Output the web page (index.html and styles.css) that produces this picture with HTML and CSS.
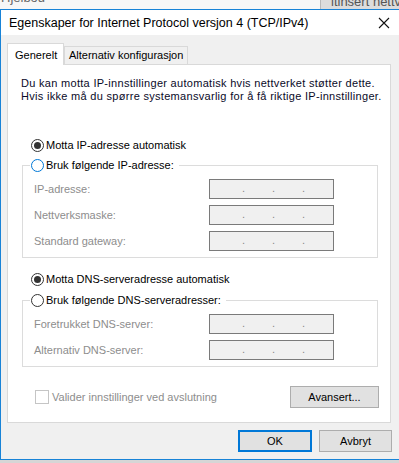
FILE: index.html
```html
<!DOCTYPE html>
<html lang="nb">
<head>
    <meta charset="UTF-8">
    <meta name="viewport" content="width=device-width, initial-scale=1.0">
    <title>Egenskaper for Internet Protocol versjon 4 (TCP/IPv4)</title>
    <link rel="stylesheet" href="styles.css">
</head>
<body>
    <div class="backdrop">
        <div class="backdrop-left"><span>Hjelbod</span></div>
        <div class="backdrop-right"><span>ltinsert nettv</span></div>
    </div>

    <div class="dialog">
        <div class="titlebar">
            <span class="title">Egenskaper for Internet Protocol versjon 4 (TCP/IPv4)</span>
            <svg class="close" width="12" height="12" viewBox="0 0 12 12">
                <path d="M1 1 L11 11 M11 1 L1 11" stroke="#111" stroke-width="1.1" fill="none"/>
            </svg>
        </div>

        <div class="body">
            <div class="tabs">
                <div class="tab active">Generelt</div>
                <div class="tab">Alternativ konfigurasjon</div>
            </div>

            <div class="panel">
                <p class="desc">Du kan motta IP-innstillinger automatisk hvis nettverket støtter dette.<br>Hvis ikke må du spørre systemansvarlig for å få riktige IP-innstillinger.</p>

                <label class="radio-row first"><span class="radio checked"></span>Motta IP-adresse automatisk</label>

                <fieldset class="group">
                    <legend><label class="radio-row"><span class="radio focus"></span>Bruk følgende IP-adresse:</label></legend>
                    <div class="field"><span class="label">IP-adresse:</span><span class="ip"><i>.</i><i>.</i><i>.</i></span></div>
                    <div class="field"><span class="label">Nettverksmaske:</span><span class="ip"><i>.</i><i>.</i><i>.</i></span></div>
                    <div class="field"><span class="label">Standard gateway:</span><span class="ip"><i>.</i><i>.</i><i>.</i></span></div>
                </fieldset>

                <label class="radio-row dns"><span class="radio checked"></span>Motta DNS-serveradresse automatisk</label>

                <fieldset class="group dns-group">
                    <legend><label class="radio-row"><span class="radio"></span>Bruk følgende DNS-serveradresser:</label></legend>
                    <div class="field"><span class="label">Foretrukket DNS-server:</span><span class="ip"><i>.</i><i>.</i><i>.</i></span></div>
                    <div class="field"><span class="label">Alternativ DNS-server:</span><span class="ip"><i>.</i><i>.</i><i>.</i></span></div>
                </fieldset>

                <div class="panel-footer">
                    <label class="check-row"><span class="checkbox"></span>Valider innstillinger ved avslutning</label>
                    <button class="btn advanced">Avansert...</button>
                </div>
            </div>

            <div class="actions">
                <button class="btn default">OK</button>
                <button class="btn">Avbryt</button>
            </div>
        </div>
    </div>
</body>
</html>
```

FILE: styles.css
```css
body {
    margin: 0;
    width: 399px;
    height: 463px;
    overflow: hidden;
    background: #d6d6d6;
    font-family: "Segoe UI", "Liberation Sans", sans-serif;
    font-size: 11px;
    color: #000;
}
.backdrop {
    display: flex;
    height: 9px;
    overflow: hidden;
}
.backdrop-left {
    flex: 1;
    background: #f7f7f7;
    padding-left: 1px;
}
.backdrop-left span,
.backdrop-right span {
    display: block;
    font-size: 13px;
    line-height: 15px;
    white-space: nowrap;
    color: #555;
}
.backdrop-left span {
    margin-top: -10px;
    color: #666;
}
.backdrop-right span {
    margin-top: -6px;
}
.backdrop-right {
    width: 68px;
    overflow: hidden;
    background: #dcdcdc;
    border-left: 1px solid #b9b9b9;
    padding-left: 10px;
}
.dialog {
    width: 398px;
    border: 1px solid #1883d7;
    border-right: none;
    background: #f0f0f0;
}
.titlebar {
    height: 25px;
    background: #fff;
    display: flex;
    align-items: center;
    justify-content: space-between;
    padding: 0 9px 0 8px;
}
.title {
    font-size: 12.5px;
}
.close {
    margin-top: 1px;
}
.body {
    padding: 8px 7px 7px 6px;
}
.tabs {
    display: flex;
    align-items: flex-end;
    height: 21px;
}
.tab {
    height: 17px;
    line-height: 17px;
    padding: 0 4px;
    border: 1px solid #d9d9d9;
    border-bottom: none;
    background: #f0f0f0;
}
.tab.active {
    height: 21px;
    line-height: 23px;
    padding: 0 7px;
    width: 41px;
    background: #fff;
    position: relative;
    margin-bottom: -1px;
    z-index: 1;
}
.panel {
    width: 382px;
    border: 1px solid #d9d9d9;
    background: #fff;
    padding-bottom: 14px;
}
.desc {
    margin: 12px 0 0 13px;
    line-height: 13px;
    letter-spacing: 0.3px;
    color: #0a0a28;
}
.radio-row {
    display: flex;
    align-items: center;
    height: 14px;
    gap: 2px;
    white-space: nowrap;
}
.radio-row.first {
    margin: 35px 0 0 23px;
}
.radio-row.dns {
    margin: 14px 0 0 23px;
}
.radio {
    width: 11px;
    height: 11px;
    border: 1px solid #333;
    border-radius: 50%;
    background: #fff;
    display: flex;
    align-items: center;
    justify-content: center;
}
.radio.checked::after {
    content: "";
    width: 7px;
    height: 7px;
    border-radius: 50%;
    background: #333;
}
.radio.focus {
    border-color: #0078d7;
}
.group {
    margin: 5px 0 0 14px;
    width: 333px;
    padding: 0 10px 6px 11px;
    border: 1px solid #dcdcdc;
}
.group legend {
    padding: 0 5px 0 1px;
    margin-left: -4px;
    height: 16px;
    display: flex;
    align-items: center;
}
.dns-group {
    margin-top: 6px;
}
.field {
    display: flex;
    align-items: center;
    height: 20px;
    margin-top: 6px;
    color: #8d8d8d;
}
.label {
    width: 175px;
}
.ip {
    border: 1px solid #7a7a7a;
    background: #f0f0f0;
    display: flex;
    padding-left: 32px;
    box-sizing: border-box;
    width: 125px;
    height: 20px;
}
.ip i {
    font-style: normal;
    width: 30px;
    line-height: 17px;
    color: #888;
}
.panel-footer {
    display: flex;
    justify-content: space-between;
    align-items: center;
    margin: 19px 11px 0 27px;
}
.check-row {
    display: flex;
    align-items: center;
    gap: 3px;
    color: #8d8d8d;
}
.checkbox {
    width: 12px;
    height: 12px;
    border: 1px solid #c5c5c5;
    background: #fff;
}
.btn {
    font: inherit;
    color: #000;
    height: 22px;
    background: #e1e1e1;
    border: 1px solid #adadad;
    padding: 0;
}
.advanced {
    width: 89px;
}
.actions {
    display: flex;
    justify-content: flex-end;
    gap: 7px;
    margin-top: 7px;
}
.actions .btn {
    width: 73px;
}
.btn.default {
    width: 74px;
    border: 2px solid #0078d7;
}
```
